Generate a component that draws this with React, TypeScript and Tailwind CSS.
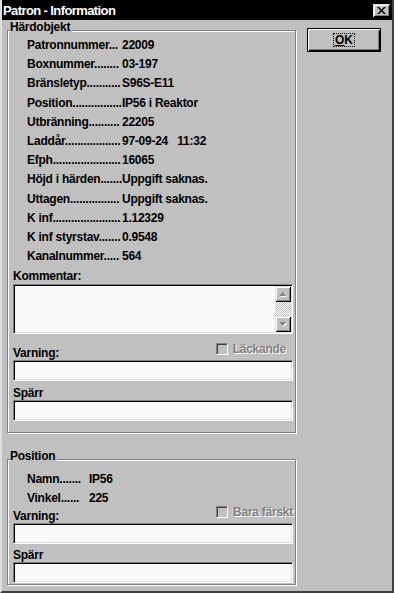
import React from 'react';

type Row = { label: string; value: string };

const coreRows: Row[] = [
  { label: 'Patronnummer...', value: '22009' },
  { label: 'Boxnummer........', value: '03-197' },
  { label: 'Bränsletyp...........', value: 'S96S-E11' },
  { label: 'Position................', value: 'IP56 i Reaktor' },
  { label: 'Utbränning..........', value: '22205' },
  { label: 'Laddår..................', value: '97-09-24   11:32' },
  { label: 'Efph......................', value: '16065' },
  { label: 'Höjd i härden.......', value: 'Uppgift saknas.' },
  { label: 'Uttagen................', value: 'Uppgift saknas.' },
  { label: 'K inf......................', value: '1.12329' },
  { label: 'K inf styrstav.......', value: '0.9548' },
  { label: 'Kanalnummer.....', value: '564' },
];

const posRows: Row[] = [
  { label: 'Namn.......', value: 'IP56' },
  { label: 'Vinkel......', value: '225' },
];

const sunken =
  'border border-t-[#808080] border-l-[#808080] border-r-white border-b-white shadow-[inset_1px_1px_0_#000,inset_-1px_-1px_0_#dfdfdf]';

const raised =
  'bg-[#c0c0c0] shadow-[inset_1px_1px_0_#dfdfdf,inset_-1px_-1px_0_#000,inset_2px_2px_0_#fff,inset_-2px_-2px_0_#808080]';

function Field() {
  return <input type="text" readOnly className={`block w-full h-[21px] bg-[#fafafa] outline-none ${sunken}`} />;
}

function Check({ label, className = '' }: { label: string; className?: string }) {
  return (
    <label className={`flex items-center gap-[5px] h-[12px] text-[#808080] [text-shadow:1px_1px_0_#fff] ${className}`}>
      <span className="w-[12px] h-[12px] bg-[#c0c0c0] border border-t-[#808080] border-l-[#808080] border-r-white border-b-white shadow-[inset_1px_1px_0_#404040]" />
      <span className="leading-[12px]">{label}</span>
    </label>
  );
}

function Arrow({ up }: { up?: boolean }) {
  return (
    <div className={`h-[16px] flex items-center justify-center ${raised}`}>
      <svg width="8" height="5" viewBox="0 0 8 5">
        {up ? (
          <>
            <path d="M1 5 L5 1 L8 5 Z" fill="#fff" />
            <path d="M0 4 L4 0 L7 4 Z" fill="#808080" />
          </>
        ) : (
          <>
            <path d="M1 1 L5 5 L8 1 Z" fill="#fff" />
            <path d="M0 0 L4 4 L7 0 Z" fill="#808080" />
          </>
        )}
      </svg>
    </div>
  );
}

function Group({ title, className = '', children }: { title: string; className?: string; children: React.ReactNode }) {
  return (
    <fieldset
      className={`w-[289px] border border-[#808080] shadow-[inset_1px_1px_0_#fff,1px_1px_0_#fff] pl-[5px] pr-[2px] ${className}`}
    >
      <legend className="-ml-[3px] pr-[2px] leading-[12px] relative -top-[3px] bg-[#c0c0c0]">{title}</legend>
      {children}
    </fieldset>
  );
}

export default function App() {
  return (
    <div className="w-[394px] h-[593px] bg-[#c0c0c0] text-black text-[12px] font-bold tracking-[-0.25px] [font-family:'Liberation_Sans',Arial,sans-serif] border-l-2 border-r-2 border-b-2 border-l-[#dfdfdf] border-r-[#404040] border-b-[#404040] flex flex-col overflow-hidden">
      {/* title bar */}
      <div className="h-[20px] shrink-0 bg-black flex items-center justify-between pl-[1px] pr-[2px]">
        <span className="text-white text-[13px] tracking-[-0.6px] leading-[18px] pt-[2px]">Patron - Information</span>
        <button className={`w-[17px] h-[13px] flex items-center justify-center ${raised}`}>
          <svg width="9" height="7" viewBox="0 0 9 7">
            <path d="M0 0h2l2.5 2.5L7 0h2L5.5 3.5 9 7H7L4.5 4.5 2 7H0l3.5-3.5z" fill="#000" />
          </svg>
        </button>
      </div>

      <div className="flex">
        <div className="ml-[5px] flex flex-col">
          <Group title="Härdobjekt" className="mt-[4px] pb-[11px]">
            <div className="pl-[14px]">
              {coreRows.map((r) => (
                <div key={r.label} className="flex h-[19.2px] leading-[19.2px] whitespace-pre">
                  <span className="w-[95px] shrink-0">{r.label}</span>
                  <span>{r.value}</span>
                </div>
              ))}
            </div>
            <div className="mt-[3px] leading-[14px]">Kommentar:</div>
            <div className={`mt-[1px] h-[50px] flex bg-[#fafafa] ${sunken}`}>
              <textarea readOnly className="flex-1 resize-none outline-none bg-transparent" />
              <div className="w-[16px] flex flex-col my-[1px] mr-[1px]">
                <Arrow up />
                <div className="flex-1 [background-image:repeating-conic-gradient(#c0c0c0_0%_25%,#ffffff_0%_50%)] [background-size:2px_2px]" />
                <Arrow />
              </div>
            </div>
            <div className="mt-[13px] h-[13px] flex items-end justify-between">
              <span className="leading-[13px]">Varning:</span>
              <Check label="Läckande" className="mb-[5px] mr-[7px]" />
            </div>
            <Field />
            <div className="mt-[5px] leading-[14px]">Spärr</div>
            <Field />
          </Group>

          <Group title="Position" className="mt-[20px] pb-[1px]">
            <div className="pl-[14px] mt-[5px]">
              {posRows.map((r) => (
                <div key={r.label} className="flex h-[19px] leading-[19px] whitespace-pre">
                  <span className="w-[62px] shrink-0">{r.label}</span>
                  <span>{r.value}</span>
                </div>
              ))}
            </div>
            <div className="h-[15px] flex items-end justify-between">
              <span className="leading-[14px]">Varning:</span>
              <Check label="Bara färskt" className="mb-[5px]" />
            </div>
            <Field />
            <div className="mt-[4px] leading-[14px]">Spärr</div>
            <Field />
          </Group>
        </div>

        <div className="ml-[11px] mt-[8px]">
          <button className="w-[74px] h-[24px] bg-[#c0c0c0] border border-black shadow-[inset_1px_1px_0_#fff,inset_-1px_-1px_0_#000,inset_-2px_-2px_0_#808080] flex items-center justify-center">
            <span className="border border-dotted border-black px-[1px] leading-[12px] tracking-normal">
              <span className="underline">O</span>K
            </span>
          </button>
        </div>
      </div>
    </div>
  );
}
